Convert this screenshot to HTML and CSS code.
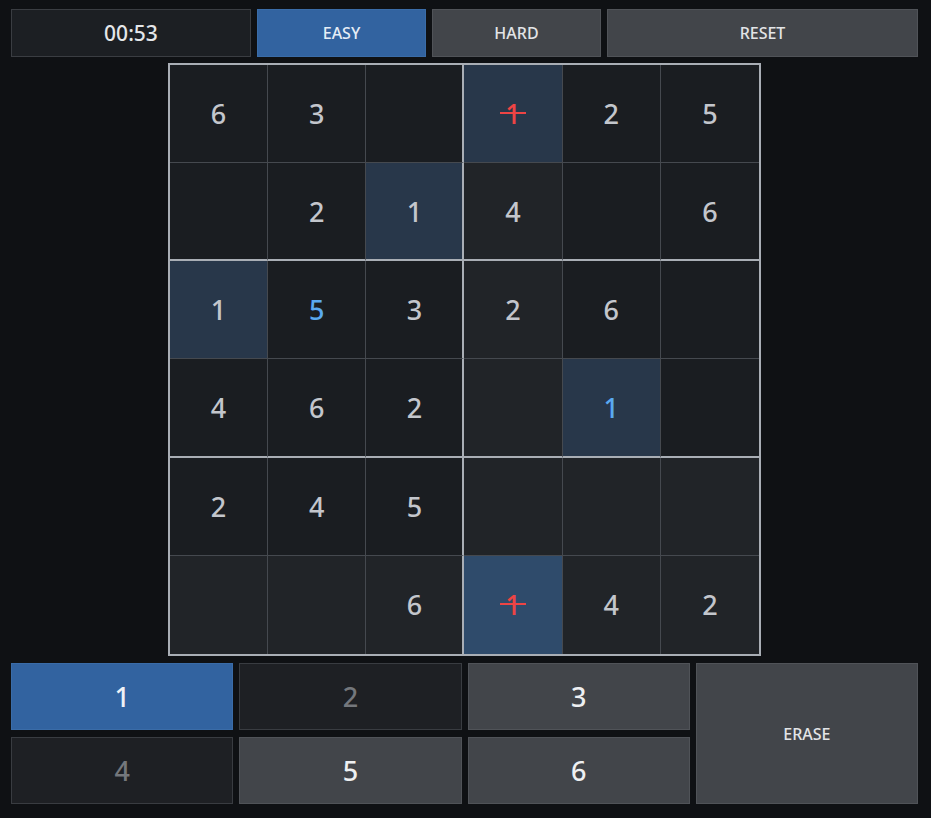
FILE: index.html
```html
<!DOCTYPE html>
<html>
<head>
<meta charset="utf-8">
<title>Sudoku</title>
<link rel="stylesheet" href="styles.css">
</head>
<body>
<div class="app">
  <div class="topbar">
    <div class="timer">00:53</div>
    <button class="btn btn-blue">EASY</button>
    <button class="btn btn-gray">HARD</button>
    <button class="btn btn-gray">RESET</button>
  </div>

  <div class="board">
    <div class="cell">6</div>
    <div class="cell">3</div>
    <div class="cell c3"></div>
    <div class="cell same"><span class="err">1</span></div>
    <div class="cell">2</div>
    <div class="cell c6">5</div>

    <div class="cell r2"></div>
    <div class="cell r2">2</div>
    <div class="cell r2 c3 same">1</div>
    <div class="cell r2 rel">4</div>
    <div class="cell r2"></div>
    <div class="cell r2 c6">6</div>

    <div class="cell same">1</div>
    <div class="cell user">5</div>
    <div class="cell c3">3</div>
    <div class="cell rel">2</div>
    <div class="cell">6</div>
    <div class="cell c6"></div>

    <div class="cell r2">4</div>
    <div class="cell r2">6</div>
    <div class="cell r2 c3">2</div>
    <div class="cell r2 rel"></div>
    <div class="cell r2 same user">1</div>
    <div class="cell r2 c6"></div>

    <div class="cell">2</div>
    <div class="cell">4</div>
    <div class="cell c3">5</div>
    <div class="cell rel"></div>
    <div class="cell rel"></div>
    <div class="cell rel c6"></div>

    <div class="cell last rel"></div>
    <div class="cell last rel"></div>
    <div class="cell last rel c3">6</div>
    <div class="cell last sel"><span class="err">1</span></div>
    <div class="cell last rel">4</div>
    <div class="cell last rel c6">2</div>
  </div>

  <div class="pad">
    <button class="key key-blue">1</button>
    <button class="key key-dim">2</button>
    <button class="key key-gray">3</button>
    <button class="key key-gray erase">ERASE</button>
    <button class="key key-dim">4</button>
    <button class="key key-gray">5</button>
    <button class="key key-gray">6</button>
  </div>
</div>
</body>
</html>
```

FILE: styles.css
```css
* {
  box-sizing: border-box;
}

html, body {
  margin: 0;
  padding: 0;
  background: #0f1114;
  height: 100%;
}

body {
  font-family: "Noto Sans", "Open Sans", sans-serif;
  color: #dcdfe3;
}

.app {
  width: 907px;
  margin-left: 11px;
  padding-top: 9px;
  display: flex;
  flex-direction: column;
}

.topbar {
  display: grid;
  grid-template-columns: 240px 169px 169px 1fr;
  gap: 6px;
  height: 48px;
}

.timer {
  background: #1c1f23;
  border: 1px solid #3a3d42;
  display: flex;
  align-items: center;
  justify-content: center;
  font-size: 21px;
  font-weight: 500;
  color: #e4e6e9;
}

.btn {
  font-family: inherit;
  font-size: 16px;
  font-weight: 500;
  letter-spacing: 0;
  border: 1px solid transparent;
  padding: 0;
  margin: 0;
}

.btn-blue {
  background: #3263a0;
  border-color: #3a6ca8;
  color: #e6edf6;
}

.btn-gray {
  background: #42454a;
  border-color: #505358;
  color: #e2e4e7;
}

.board {
  width: 593px;
  height: 593px;
  margin: 6px auto 0;
  border: 2px solid #a9aeb5;
  display: grid;
  grid-template-columns: repeat(6, 1fr);
  grid-template-rows: repeat(6, 1fr);
  background: #1a1d21;
}

.cell {
  background: #1a1d21;
  border-right: 1px solid #45494f;
  border-bottom: 1px solid #45494f;
  display: flex;
  align-items: center;
  justify-content: center;
  font-size: 27px;
  font-weight: 500;
  color: #c3c6cc;
}

.cell.c3 {
  border-right: 2px solid #a9aeb5;
}

.cell.c6 {
  border-right: none;
}

.cell.r2 {
  border-bottom: 2px solid #a9aeb5;
}

.cell.last {
  border-bottom: none;
}

.cell.rel {
  background: #212428;
}

.cell.same {
  background: #28374a;
}

.cell.sel {
  background: #2f4b6b;
}

.cell.user {
  color: #5aa9f0;
}

.err {
  position: relative;
  color: #ee4444;
}

.err::after {
  content: "";
  position: absolute;
  left: -5px;
  right: -5px;
  top: 45%;
  height: 2px;
  background: #ee4444;
}

.pad {
  margin-top: 7px;
  display: grid;
  grid-template-columns: repeat(4, 1fr);
  grid-template-rows: 67px 67px;
  column-gap: 6px;
  row-gap: 7px;
}

.key {
  font-family: inherit;
  font-size: 27px;
  font-weight: 500;
  border: 1px solid transparent;
  padding: 0;
  margin: 0;
}

.key-blue {
  background: #3263a0;
  border-color: #3a6ca8;
  color: #eef2f7;
}

.key-dim {
  background: #1e2024;
  border-color: #393c41;
  color: #74777c;
}

.key-gray {
  background: #42454a;
  border-color: #505358;
  color: #eef0f2;
}

.erase {
  grid-column: 4;
  grid-row: 1 / span 2;
  font-size: 16px;
  font-weight: 500;
  color: #e2e4e7;
}
```
